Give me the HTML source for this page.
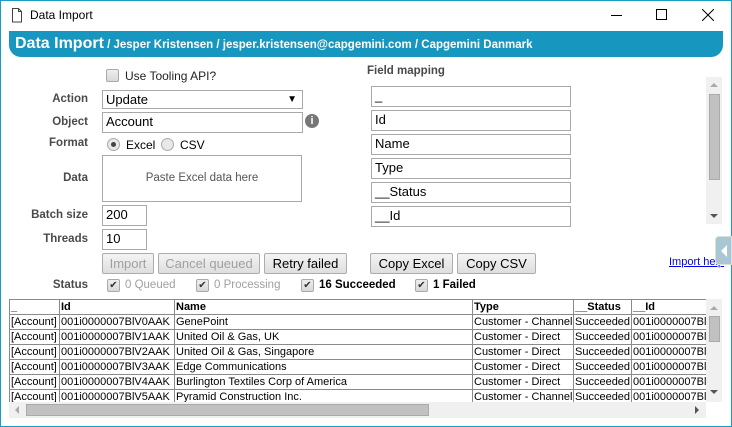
<!DOCTYPE html>
<html><head><style>
*{box-sizing:border-box;margin:0;padding:0}
body{width:732px;height:427px;overflow:hidden;background:#fff;font-family:"Liberation Sans",Arial,sans-serif;position:relative}
.a{position:absolute;white-space:nowrap}
.lbl{position:absolute;font-size:11.5px;font-weight:bold;color:#4a4a4a;text-align:right;width:80px;left:8px}
.inp{position:absolute;border:1px solid #a9a9a9;background:#fff;font-size:13px;color:#000;padding:1px 3px;line-height:16px}
.btn{position:absolute;top:253px;height:21px;border:1px solid #adadad;background:linear-gradient(#f4f4f4,#dedede);font-size:13px;text-align:center;line-height:19px;border-radius:2px}
.dis{color:#a0a0a0}
.cb{position:absolute;width:13px;height:13px;border:1px solid #a9a9a9;background:linear-gradient(#eee,#d8d8d8);border-radius:2px;font-size:10px;line-height:11px;text-align:center;color:#333}
.st{position:absolute;top:279px;font-size:11.5px;font-weight:bold}
table{position:absolute;left:0;top:0;width:702px;border-collapse:collapse;font-size:11px;table-layout:fixed}
td{border:1px solid #8a8a8a;height:15px;padding:0 1px;line-height:13px;white-space:nowrap;overflow:hidden}
th{border:1px solid #8a8a8a;height:15px;padding:0 1px;text-align:left;font-weight:bold;white-space:nowrap;overflow:hidden}
</style></head><body>
<div class="a" style="left:0;top:0;width:732px;height:427px;border:1px solid #1a9bc4"></div>
<svg class="a" style="left:11px;top:8px" width="12" height="15"><path d="M1.5 .5h6l3 3v10.5h-9z M7.5 .5v3h3" fill="none" stroke="#444"/></svg>
<div class="a" style="left:30px;top:8px;font-size:12px;color:#000">Data Import</div>
<div class="a" style="left:611px;top:15px;width:11px;height:1px;background:#000"></div>
<div class="a" style="left:656px;top:9px;width:11px;height:11px;border:1px solid #000"></div>
<svg class="a" style="left:702px;top:9px" width="12" height="12"><path d="M0 0L12 12M12 0L0 12" stroke="#000"/></svg>
<div class="a" style="left:9px;top:31px;width:714px;height:26px;background:#1797c0;border-radius:0 0 12px 12px;color:#fff;font-weight:bold;padding:4px 0 0 6px"><span style="font-size:16px">Data Import</span><span style="font-size:11.5px"> / Jesper Kristensen / jesper.kristensen@capgemini.com / Capgemini Danmark</span></div>

<div class="cb" style="left:106px;top:69px"></div>
<div class="a" style="left:125px;top:69px;font-size:12px;color:#222">Use Tooling API?</div>
<div class="lbl" style="top:93px">Action</div>
<div class="inp" style="left:102px;top:90px;width:201px;height:19px">Update<span style="position:absolute;right:5px;top:1px;font-size:10px">▼</span></div>
<div class="lbl" style="top:116px">Object</div>
<div class="inp" style="left:102px;top:112px;width:201px;height:21px">Account</div>
<div class="a" style="left:305px;top:114px;width:14px;height:14px;border-radius:50%;background:#777;color:#fff;font-size:11px;font-weight:bold;text-align:center;line-height:14px">i</div>
<div class="lbl" style="top:137px">Format</div>
<div class="a" style="left:107px;top:138px;width:13px;height:13px;border-radius:50%;border:1px solid #aaa;background:#e8e8e8"><div style="width:5px;height:5px;border-radius:50%;background:#444;margin:3px"></div></div>
<div class="a" style="left:126px;top:138px;font-size:12px">Excel</div>
<div class="a" style="left:161px;top:138px;width:13px;height:13px;border-radius:50%;border:1px solid #aaa;background:#e8e8e8"></div>
<div class="a" style="left:180px;top:138px;font-size:12px">CSV</div>
<div class="lbl" style="top:172px">Data</div>
<div class="inp" style="left:102px;top:155px;width:200px;height:47px;font-size:11.5px;color:#555;text-align:center;line-height:43px">Paste Excel data here</div>
<div class="lbl" style="top:209px">Batch size</div>
<div class="inp" style="left:102px;top:205px;width:45px;height:21px">200</div>
<div class="lbl" style="top:233px">Threads</div>
<div class="inp" style="left:102px;top:229px;width:45px;height:21px">10</div>
<div class="btn dis" style="left:102px;width:52px">Import</div>
<div class="btn dis" style="left:158px;width:102px">Cancel queued</div>
<div class="btn" style="left:264px;width:83px">Retry failed</div>
<div class="btn" style="left:370px;width:83px">Copy Excel</div>
<div class="btn" style="left:457px;width:79px">Copy CSV</div>
<div class="a" style="left:669px;top:256px;font-size:11px;color:#00e;text-decoration:underline">Import help</div>
<div class="a" style="left:715px;top:236px;width:17px;height:29px;background:#a9c7d2;border-radius:4px 0 0 4px;border:1px solid #ddd"><div style="margin:8px 0 0 5px;width:0;height:0;border-top:6px solid transparent;border-bottom:6px solid transparent;border-right:6px solid #fff"></div></div>

<div class="lbl" style="top:279px">Status</div>
<div class="cb" style="left:107px;top:279px">✔</div><div class="st dis" style="left:125px;font-weight:normal">0 Queued</div>
<div class="cb" style="left:196px;top:279px">✔</div><div class="st dis" style="left:214px;font-weight:normal">0 Processing</div>
<div class="cb" style="left:301px;top:279px">✔</div><div class="st" style="left:319px">16 Succeeded</div>
<div class="cb" style="left:415px;top:279px">✔</div><div class="st" style="left:433px">1 Failed</div>

<div class="a" style="left:367px;top:65px;font-size:11.5px;font-weight:bold;color:#4a4a4a">Field mapping</div>
<div class="inp" style="left:371px;top:86px;width:200px;height:21px">_</div>
<div class="inp" style="left:371px;top:110px;width:200px;height:21px">Id</div>
<div class="inp" style="left:371px;top:134px;width:200px;height:21px">Name</div>
<div class="inp" style="left:371px;top:158px;width:200px;height:21px">Type</div>
<div class="inp" style="left:371px;top:182px;width:200px;height:21px">__Status</div>
<div class="inp" style="left:371px;top:206px;width:200px;height:21px">__Id</div>
<div class="a" style="left:706px;top:77px;width:16px;height:147px;background:#f0f0f0"><div style="position:absolute;left:3px;top:17px;width:11px;height:86px;background:#c1c1c1;border:1px solid #aaa"></div><div style="position:absolute;left:4px;top:6px;border-left:4px solid transparent;border-right:4px solid transparent;border-bottom:4px solid #aaa"></div><div style="position:absolute;left:4px;top:137px;border-left:4px solid transparent;border-right:4px solid transparent;border-top:4px solid #555"></div></div>

<div class="a" style="left:9px;top:299px;width:697px;height:103px;overflow:hidden">
<table>
<colgroup><col style="width:50px"><col style="width:115px"><col style="width:298px"><col style="width:101px"><col style="width:58px"><col style="width:80px"></colgroup>
<tr><th>_</th><th>Id</th><th>Name</th><th>Type</th><th>__Status</th><th>__Id</th></tr>
<tr><td>[Account]</td><td>001i0000007BlV0AAK</td><td>GenePoint</td><td>Customer - Channel</td><td>Succeeded</td><td>001i0000007BlV0AAK</td></tr>
<tr><td>[Account]</td><td>001i0000007BlV1AAK</td><td>United Oil &amp; Gas, UK</td><td>Customer - Direct</td><td>Succeeded</td><td>001i0000007BlV1AAK</td></tr>
<tr><td>[Account]</td><td>001i0000007BlV2AAK</td><td>United Oil &amp; Gas, Singapore</td><td>Customer - Direct</td><td>Succeeded</td><td>001i0000007BlV2AAK</td></tr>
<tr><td>[Account]</td><td>001i0000007BlV3AAK</td><td>Edge Communications</td><td>Customer - Direct</td><td>Succeeded</td><td>001i0000007BlV3AAK</td></tr>
<tr><td>[Account]</td><td>001i0000007BlV4AAK</td><td>Burlington Textiles Corp of America</td><td>Customer - Direct</td><td>Succeeded</td><td>001i0000007BlV4AAK</td></tr>
<tr><td>[Account]</td><td>001i0000007BlV5AAK</td><td>Pyramid Construction Inc.</td><td>Customer - Channel</td><td>Succeeded</td><td>001i0000007BlV5AAK</td></tr>
</table></div>
<div class="a" style="left:706px;top:299px;width:16px;height:103px;background:#f0f0f0"><div style="position:absolute;left:3px;top:17px;width:11px;height:26px;background:#c1c1c1;border:1px solid #aaa"></div><div style="position:absolute;left:4px;top:7px;border-left:4px solid transparent;border-right:4px solid transparent;border-bottom:4px solid #aaa"></div><div style="position:absolute;left:4px;top:91px;border-left:4px solid transparent;border-right:4px solid transparent;border-top:4px solid #555"></div></div>
<div class="a" style="left:9px;top:402px;width:697px;height:16px;background:#f0f0f0"><div style="position:absolute;left:17px;top:2px;width:403px;height:12px;background:#c1c1c1;border:1px solid #aaa"></div><div style="position:absolute;left:6px;top:4px;border-top:4px solid transparent;border-bottom:4px solid transparent;border-right:4px solid #aaa"></div><div style="position:absolute;left:686px;top:4px;border-top:4px solid transparent;border-bottom:4px solid transparent;border-left:4px solid #555"></div></div>
</body></html>
